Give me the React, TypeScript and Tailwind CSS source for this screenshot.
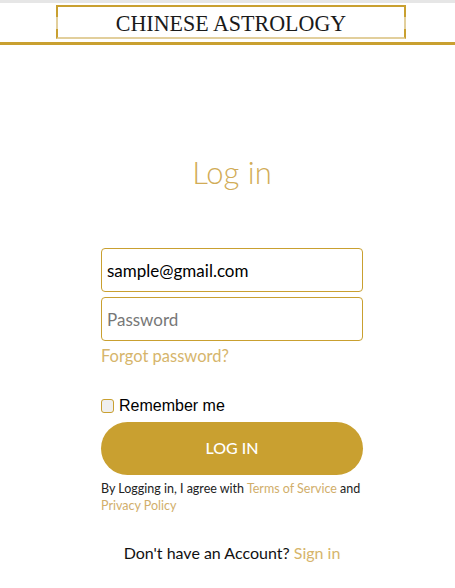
import { useState } from "react";

const gold = "#c9a030";

export default function App() {
  const [email, setEmail] = useState("sample@gmail.com");
  const [password, setPassword] = useState("");
  const [remember, setRemember] = useState(false);

  return (
    <div className="min-h-[588px] w-[455px] bg-white font-['Nunito','Lato','Noto_Sans',sans-serif] text-[#111]">
      {/* header */}
      <div className="h-[3px] bg-[#e6e6e6]" />
      <header className="border-b-[3px] border-[#c9a030] pt-[2px] pb-[3px]">
        <div className="relative ml-[56px] flex h-[34px] w-[350px] items-center justify-center border-2 border-[#c9a030] border-b-[#e2cf9c]">
          <span className="absolute left-[-2px] top-[10px] h-[12px] w-[2px] bg-[#e2cf9c]" />
          <span className="absolute right-[-2px] top-[10px] h-[12px] w-[2px] bg-[#e2cf9c]" />
          <h1 className="pt-[3px] font-['Liberation_Serif',serif] text-[22px] leading-none text-[#1a1a1a] [transform:scaleY(1.05)]">
            CHINESE ASTROLOGY
          </h1>
        </div>
      </header>

      <main className="ml-[101px] w-[262px]">
        <h2 className="mt-[112px] text-center font-['Lato',sans-serif] text-[31px] font-light leading-none text-[#d1ac57]">
          Log in
        </h2>

        <div className="mt-[60px] flex flex-col gap-[5px]">
          <input
            value={email}
            onChange={(e) => setEmail(e.target.value)}
            className="h-[44px] w-full rounded-[4px] border border-[#c9a030] px-[5px] font-['Lato',sans-serif] text-[17px] text-black outline-none"
          />
          <input
            type="password"
            value={password}
            placeholder="Password"
            onChange={(e) => setPassword(e.target.value)}
            className="h-[44px] w-full rounded-[4px] border border-[#c9a030] px-[5px] font-['Lato',sans-serif] text-[17px] text-black outline-none placeholder:text-[#777]"
          />
        </div>
        <a className="mt-[3px] block font-['Lato',sans-serif] text-[16.5px] text-[#d6b56b]">Forgot password?</a>

        <label className="mt-[25px] flex items-center gap-[5px] font-['Liberation_Sans',sans-serif] text-[16px] text-black">
          <input
            type="checkbox"
            checked={remember}
            onChange={(e) => setRemember(e.target.checked)}
            className="h-[14px] w-[13px] appearance-none rounded-[3px] border border-[#c9a030] bg-[#efefef] checked:bg-[#c9a030]"
          />
          Remember me
        </label>

        <button
          className="mt-[4px] h-[53px] w-full rounded-full font-['Lato',sans-serif] text-[16px] font-medium text-white"
          style={{ backgroundColor: gold }}
        >
          LOG IN
        </button>

        <p className="mt-[5px] font-['Lato',sans-serif] text-[12.5px] leading-[17px] text-[#222]">
          By Logging in, I agree with <a className="text-[#d1ae6a]">Terms of Service</a> and{" "}
          <a className="text-[#d1ae6a]">Privacy Policy</a>
        </p>

        <p className="mt-[27px] text-center font-['Lato',sans-serif] text-[16px] text-[#111]">
          Don't have an Account? <a className="text-[#d6b56b]">Sign in</a>
        </p>
      </main>
    </div>
  );
}
